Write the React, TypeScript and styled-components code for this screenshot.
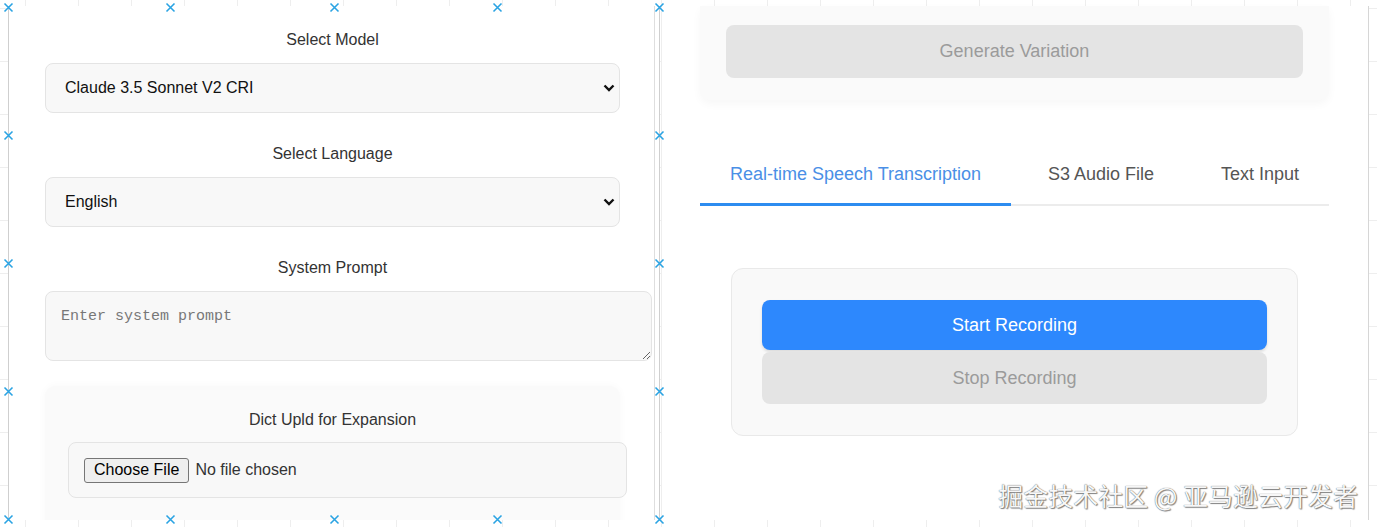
import styled, { createGlobalStyle } from 'styled-components';

const GlobalStyle = createGlobalStyle`
  html, body {
    margin: 0;
    padding: 0;
  }
  body {
    font-family: "Liberation Sans", Arial, sans-serif;
    background: #fff;
  }
  * {
    box-sizing: border-box;
  }
`;

// selection handles around the left frame (x, y relative to frame box)
const edgeX = [0, 162, 326, 489, 651];
const edgeY = [2, 130, 258, 386, 514];
const handles: { x: number; y: number }[] = [
  ...edgeX.map((x) => ({ x, y: 2 })),
  ...edgeX.map((x) => ({ x, y: 514 })),
  ...edgeY.slice(1, 4).map((y) => ({ x: 0, y })),
  ...edgeY.slice(1, 4).map((y) => ({ x: 651, y })),
];

const tabs = ['Real-time Speech Transcription', 'S3 Audio File', 'Text Input'];

export default function App() {
  return (
    <>
      <GlobalStyle />
      <Canvas>
        <LeftFrame>
          <LeftContent>
            <Label>Select Model</Label>
            <SelectBox>
              <span>Claude 3.5 Sonnet V2 CRI</span>
              <Chevron />
            </SelectBox>

            <Label>Select Language</Label>
            <SelectBox>
              <span>English</span>
              <Chevron />
            </SelectBox>

            <Label>System Prompt</Label>
            <PromptArea placeholder="Enter system prompt" />

            <DictPanel>
              <Label $inner>Dict Upld for Expansion</Label>
              <FileBox>
                <ChooseButton type="button">Choose File</ChooseButton>
                <FileName>No file chosen</FileName>
              </FileBox>
            </DictPanel>
          </LeftContent>

          {handles.map((h, i) => (
            <Handle key={i} style={{ left: h.x, top: h.y }}>
              <svg width="11" height="11" viewBox="0 0 11 11">
                <path d="M1.5 1.5 L9.5 9.5 M9.5 1.5 L1.5 9.5" stroke="#2aa3e3" strokeWidth="1.6" />
              </svg>
            </Handle>
          ))}
        </LeftFrame>

        <RightPanel>
          <TopCard>
            <ActionButton $variant="muted" $height={53}>
              Generate Variation
            </ActionButton>
          </TopCard>

          <TabBar>
            {tabs.map((t, i) => (
              <Tab key={t} $active={i === 0}>
                {t}
              </Tab>
            ))}
          </TabBar>

          <RecordCard>
            <ActionButton $variant="primary" $height={50}>
              Start Recording
            </ActionButton>
            <ActionButton $variant="muted" $height={52}>
              Stop Recording
            </ActionButton>
          </RecordCard>
        </RightPanel>

        <Watermark>掘金技术社区 @ 亚马逊云开发者</Watermark>
      </Canvas>
    </>
  );
}

function Chevron() {
  return (
    <svg width="12" height="8" viewBox="0 0 12 8">
      <polyline points="1.5,1.5 6,6 10.5,1.5" fill="none" stroke="#111" strokeWidth="2.4" />
    </svg>
  );
}

const Canvas = styled.div`
  position: relative;
  width: 1377px;
  height: 527px;
  padding: 6px 8px 7px 8px;
  display: flex;
  overflow: hidden;
  background-color: #fff;
  background-image: linear-gradient(#eeeeee 1px, transparent 1px),
    linear-gradient(90deg, #eeeeee 1px, transparent 1px);
  background-size: 53px 53px;
  background-position: 25px 8px;
`;

const LeftFrame = styled.div`
  position: relative;
  width: 652px;
  height: 100%;
  background: #fff;
  border-left: 1px solid #cfcfcf;
  border-right: 1px solid #cfcfcf;
  box-shadow: inset -4px 0 0 #fff, inset -5px 0 0 #dedede;
`;

const LeftContent = styled.div`
  height: 100%;
  overflow: hidden;
  padding: 24px 0 0 36px;
`;

const Label = styled.div<{ $inner?: boolean }>`
  width: ${(p) => (p.$inner ? 'auto' : '575px')};
  font-size: 16px;
  line-height: 20px;
  color: #333;
  text-align: center;
  margin-bottom: ${(p) => (p.$inner ? '12px' : '13px')};
`;

const SelectBox = styled.div`
  width: 575px;
  height: 50px;
  display: flex;
  align-items: center;
  justify-content: space-between;
  padding: 0 4px 0 19px;
  margin-bottom: 31px;
  background: #f8f8f8;
  border: 1px solid #e4e4e4;
  border-radius: 8px;
  font-size: 16px;
  color: #111;
`;

const PromptArea = styled.textarea`
  display: block;
  width: 607px;
  height: 70px;
  padding: 16px 15px;
  margin: 0 0 25px;
  background: #f8f8f8;
  border: 1px solid #e4e4e4;
  border-radius: 8px;
  font-family: "Liberation Mono", "DejaVu Sans Mono", monospace;
  font-size: 15px;
  line-height: 18px;
  color: #333;
  resize: vertical;
  outline: none;

  &::placeholder {
    color: #777;
  }
`;

const DictPanel = styled.div`
  width: 575px;
  height: 200px;
  padding: 24px 23px 0;
  background: #fafafa;
  border-radius: 10px;
  box-shadow: 0 0 8px rgba(0, 0, 0, 0.03);
`;

const FileBox = styled.div`
  width: 559px;
  height: 56px;
  display: flex;
  align-items: center;
  padding-left: 15px;
  background: #f8f8f8;
  border: 1px solid #e4e4e4;
  border-radius: 8px;
`;

const ChooseButton = styled.button`
  height: 25px;
  padding: 0 9px;
  font-family: "Liberation Sans", Arial, sans-serif;
  font-size: 16px;
  color: #000;
  background: #efefef;
  border: 1px solid #767676;
  border-radius: 3px;
`;

const FileName = styled.span`
  margin-left: 6px;
  font-size: 16px;
  color: #333;
`;

const Handle = styled.span`
  position: absolute;
  width: 11px;
  height: 11px;
  margin: -6px 0 0 -6px;
  display: flex;
`;

const RightPanel = styled.div`
  flex: 1;
  height: 100%;
  margin-left: 2px;
  padding: 0 39px 0 38px;
  background: #fff;
  border-right: 1px solid #d6d6d6;
`;

const TopCard = styled.div`
  padding: 19px 26px 22px;
  background: #fafafa;
  border-radius: 0 0 10px 10px;
  box-shadow: 0 4px 10px rgba(0, 0, 0, 0.035);
`;

const ActionButton = styled.button<{ $variant: 'primary' | 'muted'; $height: number }>`
  display: block;
  width: 100%;
  height: ${(p) => p.$height}px;
  border: none;
  border-radius: 8px;
  font-family: "Liberation Sans", Arial, sans-serif;
  font-size: 18px;
  color: ${(p) => (p.$variant === 'primary' ? '#fff' : '#9b9b9b')};
  background: ${(p) => (p.$variant === 'primary' ? '#2d88fd' : '#e4e4e4')};
  box-shadow: ${(p) => (p.$variant === 'primary' ? '0 2px 3px rgba(0,0,0,0.12)' : 'none')};
`;

const TabBar = styled.div`
  margin-top: 52px;
  display: flex;
  justify-content: space-between;
  border-bottom: 2px solid #ececec;
`;

const Tab = styled.div<{ $active?: boolean }>`
  padding: 12px 30px 18px;
  margin-bottom: -2px;
  font-size: 18px;
  line-height: 21px;
  color: ${(p) => (p.$active ? '#4a8fe6' : '#555')};
  border-bottom: 3px solid ${(p) => (p.$active ? '#2d8cf0' : 'transparent')};
`;

const RecordCard = styled.div`
  margin: 62px 31px 0;
  padding: 31px 30px 31px;
  display: flex;
  flex-direction: column;
  gap: 2px;
  background: #f9f9f9;
  border: 1px solid #e9e9e9;
  border-radius: 12px;
`;

const Watermark = styled.div`
  position: absolute;
  right: 19px;
  bottom: 18px;
  font-family: "Noto Sans CJK SC", "Liberation Sans", sans-serif;
  font-size: 25px;
  line-height: 27px;
  color: #f7f7f7;
  text-shadow: 0 0 1px #444, 1px 1px 1px #888;
`;
